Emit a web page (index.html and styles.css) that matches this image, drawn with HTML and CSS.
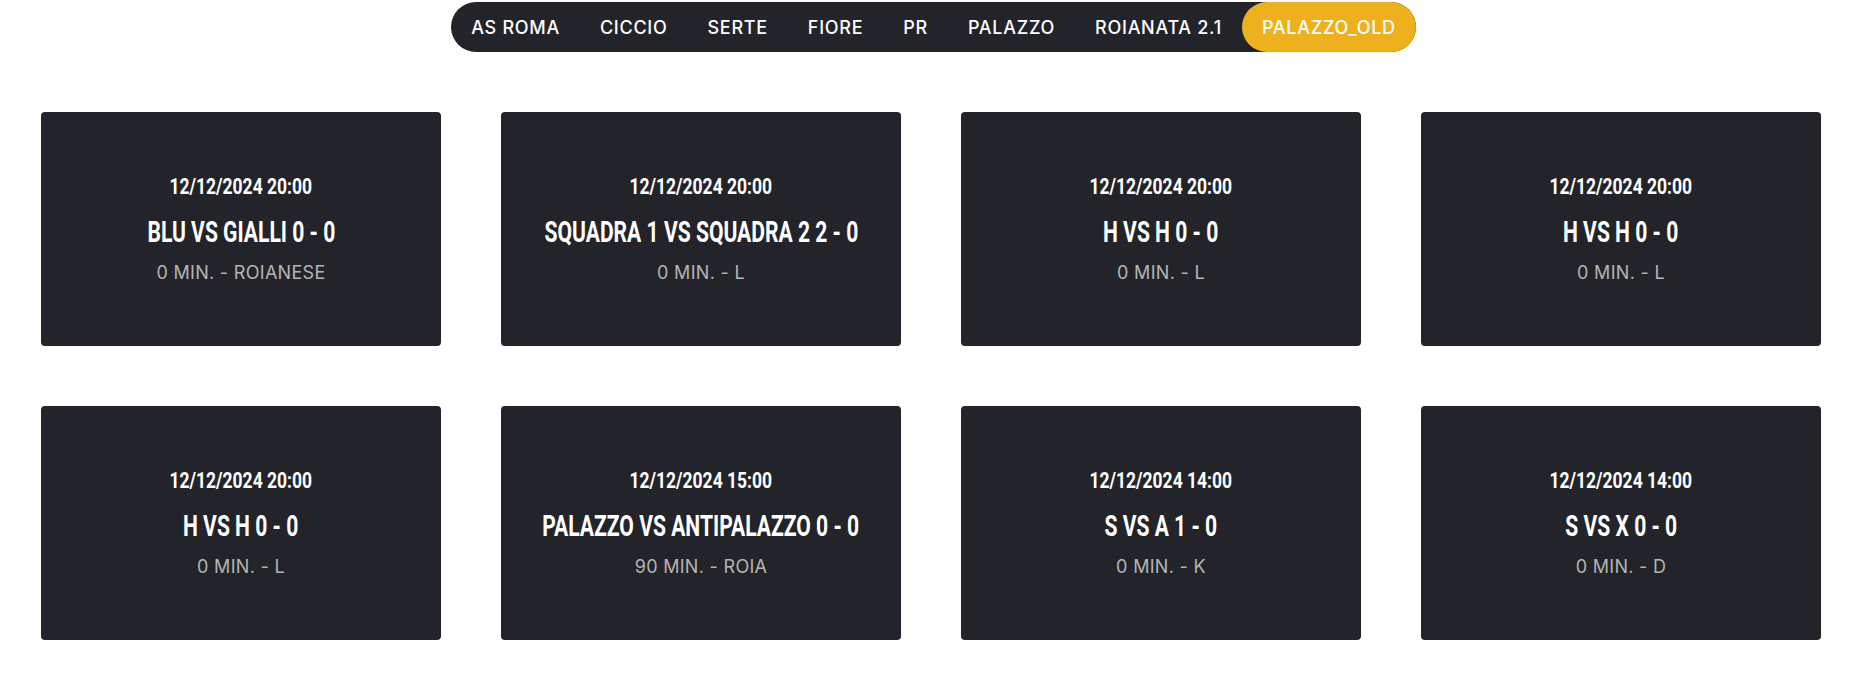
FILE: index.html
```html
<!DOCTYPE html>
<html lang="it">
<head>
<meta charset="utf-8">
<title>Partite</title>
<link rel="stylesheet" href="styles.css">
</head>
<body>
<div class="page">
  <nav class="tabs">
    <a class="tab">AS ROMA</a>
    <a class="tab">CICCIO</a>
    <a class="tab">SERTE</a>
    <a class="tab">FIORE</a>
    <a class="tab">PR</a>
    <a class="tab">PALAZZO</a>
    <a class="tab">ROIANATA 2.1</a>
    <a class="tab active">PALAZZO_OLD</a>
  </nav>
  <main class="grid">
    <div class="card"><div class="date">12/12/2024 20:00</div><div class="title">BLU VS GIALLI 0 - 0</div><div class="meta">0 MIN. - ROIANESE</div></div>
    <div class="card"><div class="date">12/12/2024 20:00</div><div class="title">SQUADRA 1 VS SQUADRA 2 2 - 0</div><div class="meta">0 MIN. - L</div></div>
    <div class="card"><div class="date">12/12/2024 20:00</div><div class="title">H VS H 0 - 0</div><div class="meta">0 MIN. - L</div></div>
    <div class="card"><div class="date">12/12/2024 20:00</div><div class="title">H VS H 0 - 0</div><div class="meta">0 MIN. - L</div></div>
    <div class="card"><div class="date">12/12/2024 20:00</div><div class="title">H VS H 0 - 0</div><div class="meta">0 MIN. - L</div></div>
    <div class="card"><div class="date">12/12/2024 15:00</div><div class="title">PALAZZO VS ANTIPALAZZO 0 - 0</div><div class="meta">90 MIN. - ROIA</div></div>
    <div class="card"><div class="date">12/12/2024 14:00</div><div class="title">S VS A 1 - 0</div><div class="meta">0 MIN. - K</div></div>
    <div class="card"><div class="date">12/12/2024 14:00</div><div class="title">S VS X 0 - 0</div><div class="meta">0 MIN. - D</div></div>
  </main>
</div>
</body>
</html>
```
FILE: styles.css
```css
* { box-sizing: border-box; }
html, body { margin: 0; padding: 0; background: #ffffff; }
body { font-family: "Inter", "Roboto", sans-serif; }
.page { padding: 2px 41px 0 41px; }
.tabs {
  display: flex;
  width: max-content;
  margin: 0 auto;
  background: #232429;
  border-radius: 25px;
  height: 50px;
}
.tab {
  display: flex;
  align-items: center;
  height: 50px;
  padding: 0 20px;
  color: #ffffff;
  font-size: 18px;
  font-weight: 500;
  letter-spacing: 0.72px;
  border-radius: 25px;
  white-space: nowrap;
}
.tab.active { background: #eeb01d; }
.grid {
  display: grid;
  grid-template-columns: repeat(4, 400px);
  column-gap: 60px;
  row-gap: 60px;
  margin-top: 60px;
}
.card {
  height: 234px;
  background: #232429;
  border-radius: 4px;
  display: flex;
  flex-direction: column;
  align-items: center;
  justify-content: center;
  text-align: center;
}
.date {
  font-family: "Roboto", sans-serif;
  font-weight: 700;
  font-size: 22.5px;
  color: #ffffff;
  line-height: 24px;
  white-space: nowrap;
  transform: scaleX(0.777);
}
.title {
  font-family: "Roboto", sans-serif;
  font-weight: 700;
  font-size: 29.5px;
  color: #ffffff;
  line-height: 32px;
  margin-top: 18px;
  white-space: nowrap;
  transform: scaleX(0.715);
}
.meta {
  font-size: 18px;
  color: #b4b4b4;
  line-height: 22px;
  letter-spacing: 0.3px;
  margin-top: 14px;
}
```
